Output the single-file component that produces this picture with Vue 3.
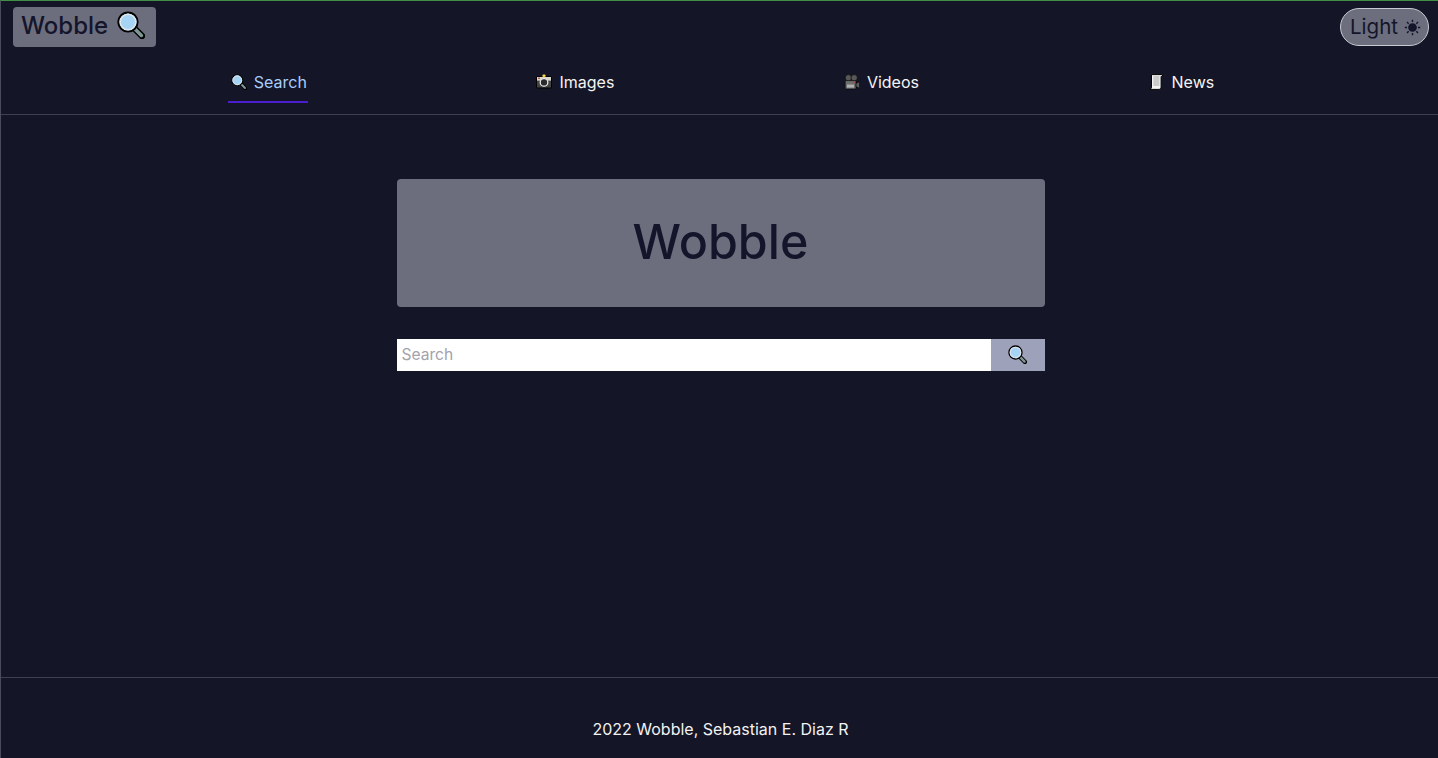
<template>
  <div class="page">
    <header class="topbar">
      <a class="brand">
        <span>Wobble</span>
        <svg class="brand-icon" viewBox="0 0 28 28"><use href="#lens" /></svg>
      </a>
      <button class="theme-btn">
        <span>Light</span>
        <svg class="sun" viewBox="0 0 18 18">
          <circle cx="9" cy="9" r="4.6" fill="#14152a" />
          <path d="M9 .8v2.4M9 14.8v2.4M.8 9h2.4M14.8 9h2.4M3.2 3.2l1.7 1.7M13.1 13.1l1.7 1.7M3.2 14.8l1.7-1.7M13.1 4.9l1.7-1.7" stroke="#14152a" stroke-width="1.5" fill="none" />
        </svg>
      </button>
    </header>

    <nav class="tabs">
      <a class="tab active">
        <svg class="tab-icon" viewBox="0 0 28 28"><use href="#lens" /></svg>
        Search
      </a>
      <a class="tab">
        <svg class="tab-icon" viewBox="0 0 16 16">
          <rect x=".5" y="2.5" width="15" height="11.5" rx="1" fill="#444" stroke="#000" />
          <rect x="1" y="3" width="14" height="3.6" fill="#dcd8c8" />
          <rect x="2" y="3.6" width="2" height="1.4" fill="#c0605a" />
          <circle cx="8" cy="8.4" r="3.8" fill="#2a2a2a" stroke="#e6e6e6" stroke-width="1.3" />
          <rect x="6.4" y=".6" width="3.2" height="2.4" rx="1" fill="#f4d742" />
        </svg>
        Images
      </a>
      <a class="tab">
        <svg class="tab-icon" viewBox="0 0 16 16">
          <circle cx="4.4" cy="3.8" r="3.2" fill="#585858" stroke="#000" stroke-width=".6" />
          <circle cx="10.2" cy="3.8" r="3.2" fill="#585858" stroke="#000" stroke-width=".6" />
          <rect x="1.2" y="6.6" width="10.8" height="8.4" rx="1" fill="#6e6e6e" stroke="#000" stroke-width=".6" />
          <rect x="3" y="10.6" width="7" height="3" fill="#b0b0b0" />
          <path d="M12 9.4l3.6-1.8v6.8L12 12.6z" fill="#5c5c5c" stroke="#000" stroke-width=".6" />
          <rect x="9.4" y="7.8" width="1.6" height="1" fill="#c33" />
        </svg>
        Videos
      </a>
      <a class="tab">
        <svg class="tab-icon" viewBox="0 0 16 16">
          <path d="M2.5 .6h11v1.8h-1.4v10.8q0 2.2-2 2.2H.8q1.7-.4 1.7-2.4z" fill="#f2f2f2" stroke="#000" />
          <path d="M4.4 3h6M4.4 5h6M4.4 7h6M4.4 9h6M4.4 11h6" stroke="#a2a2a2" />
        </svg>
        News
      </a>
    </nav>

    <main class="main">
      <div class="hero">Wobble</div>
      <form class="search" @submit.prevent>
        <input class="search-input" type="text" placeholder="Search" />
        <button class="search-btn" type="submit">
          <svg class="btn-icon" viewBox="0 0 28 28"><use href="#lens" /></svg>
        </button>
      </form>
    </main>

    <footer class="footer">2022 Wobble, Sebastian E. Diaz R</footer>

    <svg width="0" height="0" class="defs">
      <defs>
        <g id="lens">
          <path d="M17 17l8 8" stroke="#000" stroke-width="6.4" stroke-linecap="round" />
          <path d="M18 18l6.4 6.4" stroke="#7f9794" stroke-width="3.6" stroke-linecap="round" />
          <circle cx="11" cy="11" r="9.6" fill="#a6d4f5" stroke="#000" stroke-width="2" />
          <circle cx="11" cy="11" r="7.8" fill="none" stroke="#dfe6ea" stroke-width="1.6" />
        </g>
      </defs>
    </svg>
  </div>
</template>

<script setup>
</script>

<style>
body {
  margin: 0;
  background: #141526;
}
</style>

<style scoped>
.page {
  height: 758px;
  box-sizing: border-box;
  display: flex;
  flex-direction: column;
  background: #141526;
  border-top: 1px solid #3f8f45;
  border-left: 1px solid #4a4b5c;
  font-family: Inter, "Noto Sans", sans-serif;
  color: #f2f2f2;
  overflow: hidden;
}

.defs {
  position: absolute;
}

.topbar {
  display: flex;
  justify-content: space-between;
  align-items: flex-start;
  padding: 6px 9px 0 12px;
  height: 53px;
  box-sizing: border-box;
}

.brand {
  display: flex;
  align-items: center;
  gap: 9px;
  width: 143px;
  height: 40px;
  box-sizing: border-box;
  padding: 0 8px;
  border-radius: 4px;
  background: #6c6e7e;
  color: #14152a;
  font-size: 24px;
  font-weight: 500;
  line-height: 36px;
}

.brand span {
  margin-top: -2px;
}

.brand-icon {
  width: 28px;
  height: 28px;
  flex: none;
  margin-top: -4px;
}

.theme-btn {
  display: flex;
  align-items: center;
  gap: 6px;
  width: 89px;
  height: 38px;
  margin-top: 1px;
  box-sizing: border-box;
  padding: 0 8px 0 9px;
  border: 1px solid #c9c9d2;
  border-radius: 19px;
  background: #6c6e7e;
  color: #14152a;
  font-family: inherit;
  font-size: 20.5px;
}

.theme-btn span {
  margin-top: -2px;
}

.sun {
  width: 17px;
  height: 17px;
  flex: none;
}

.tabs {
  display: flex;
  justify-content: space-around;
  height: 61px;
  box-sizing: border-box;
  padding: 0 110px 0 114px;
  border-bottom: 1px solid #3e3f50;
  font-size: 16px;
}

.tab {
  display: flex;
  align-items: center;
  gap: 7px;
  height: 49px;
  padding: 7px 1px 0 3px;
  box-sizing: border-box;
  color: #f4f4f4;
}

.tab.active {
  color: #a8cdfb;
  border-bottom: 2px solid #4b1fd0;
  padding-top: 9px;
}

.tab-icon {
  width: 16px;
  height: 16px;
  flex: none;
}

.main {
  flex: 1;
  display: flex;
  flex-direction: column;
  align-items: center;
  padding: 64px 0 0 2px;
}

.hero {
  width: 648px;
  height: 128px;
  display: flex;
  align-items: center;
  justify-content: center;
  border-radius: 4px;
  background: #6c6e7e;
  color: #14152a;
  font-size: 48.4px;
  font-weight: 500;
  padding-bottom: 4px;
  box-sizing: border-box;
}

.search {
  display: flex;
  width: 648px;
  height: 32px;
  margin-top: 32px;
}

.search-input {
  flex: 1;
  min-width: 0;
  border: none;
  outline: none;
  padding: 0 4px 2px 5px;
  background: #fff;
  font-family: inherit;
  font-size: 15.6px;
}

.search-input::placeholder {
  color: #a3a3ad;
}

.search-btn {
  width: 54px;
  display: flex;
  align-items: center;
  justify-content: center;
  border: none;
  padding: 0 0 2px;
  background: #9da1ba;
}

.btn-icon {
  width: 19px;
  height: 19px;
}

.footer {
  height: 81px;
  box-sizing: border-box;
  padding: 41px 0 0 2px;
  border-top: 1px solid #3e3f50;
  text-align: center;
  font-size: 16px;
  line-height: 20px;
}
</style>
